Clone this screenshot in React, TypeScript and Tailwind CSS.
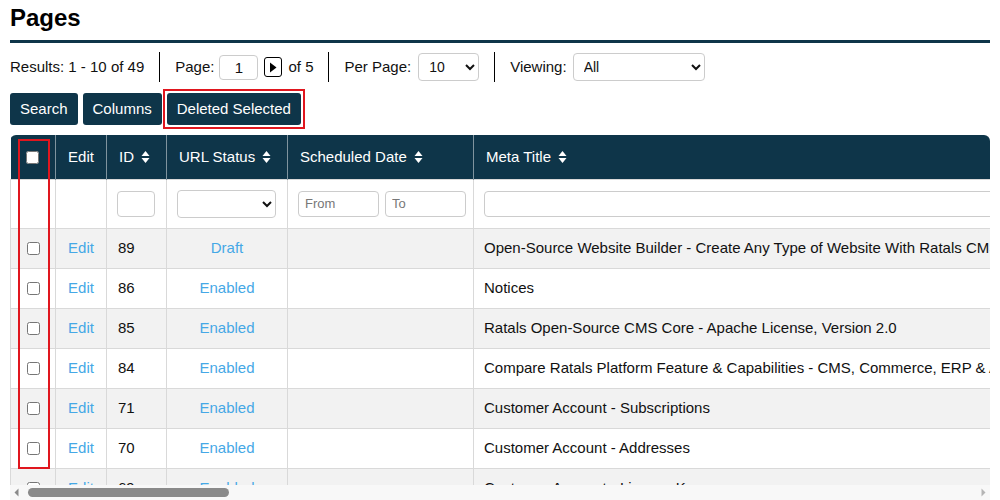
import React from "react";

const NAVY = "bg-[#0e3549]";

function SortIcon() {
  return (
    <svg width="9" height="14" viewBox="0 0 9 14" className="inline-block ml-[7px] -mt-[2px] align-middle">
      <path d="M0.5 6 L4.5 1 L8.5 6 Z" fill="white" />
      <path d="M0.5 8 L4.5 13 L8.5 8 Z" fill="white" />
    </svg>
  );
}

const rows = [
  { id: 89, status: "Draft", title: "Open-Source Website Builder - Create Any Type of Website With Ratals CMS" },
  { id: 86, status: "Enabled", title: "Notices" },
  { id: 85, status: "Enabled", title: "Ratals Open-Source CMS Core - Apache License, Version 2.0" },
  { id: 84, status: "Enabled", title: "Compare Ratals Platform Feature & Capabilities - CMS, Commerce, ERP & API" },
  { id: 71, status: "Enabled", title: "Customer Account - Subscriptions" },
  { id: 70, status: "Enabled", title: "Customer Account - Addresses" },
  { id: 69, status: "Enabled", title: "Customer Account - License Keys" },
];

function Sep() {
  return <div className="w-px h-[30px] bg-black mx-[15px]" />;
}

export default function App() {
  return (
    <div className="w-[1000px] h-[500px] overflow-hidden bg-white px-[10px] text-[#111] font-['Liberation_Sans',Arial,sans-serif]">
      <h1 className="text-[24px] font-bold leading-[28px] pt-[4px] pb-[8px] border-b-[3px] border-[#0e3549] text-black">
        Pages
      </h1>

      <div className="flex items-center h-[30px] mt-[9px] text-[15px]">
        <span>Results: 1 - 10 of 49</span>
        <Sep />
        <span>Page:</span>
        <input
          defaultValue="1"
          className="ml-[5px] w-[39px] h-[25px] border border-[#ccc] rounded-[4px] text-center text-[15px] bg-white"
        />
        <button className="ml-[6px] w-[18px] h-[20px] border border-black rounded-[3px] flex items-center justify-center bg-white">
          <svg width="8" height="11" viewBox="0 0 8 11">
            <path d="M1 0.5 L7.5 5.5 L1 10.5 Z" fill="black" />
          </svg>
        </button>
        <span className="ml-[6px]">of 5</span>
        <Sep />
        <span>Per Page:</span>
        <select className="ml-[7px] w-[61px] h-[28px] border border-[#ccc] rounded-[4px] bg-white text-[14px] pl-[6px]">
          <option>10</option>
        </select>
        <Sep />
        <span>Viewing:</span>
        <select className="ml-[6px] w-[132px] h-[28px] border border-[#ccc] rounded-[4px] bg-white text-[14px] pl-[6px]">
          <option>All</option>
        </select>
      </div>

      <div className="flex mt-[11px]">
        <button className={`${NAVY} text-white text-[15px] h-[32px] px-[10px] rounded-[3px]`}>Search</button>
        <button className={`${NAVY} ml-[5px] text-white text-[15px] h-[32px] px-[10px] rounded-[3px]`}>Columns</button>
        <div className="relative ml-[5px]">
          <button className={`${NAVY} text-white text-[15px] h-[32px] px-[10px] rounded-[3px]`}>
            Deleted Selected
          </button>
          <div className="absolute -inset-[4px] border-2 border-[#e0161e] pointer-events-none" />
        </div>
      </div>

      <div className="relative mt-[10px]">
        <div className="h-[350px] overflow-hidden rounded-t-[6px]">
          <table className="table-fixed border-collapse w-[4630px] text-[15px]">
            <colgroup>
              <col className="w-[45px]" />
              <col className="w-[51px]" />
              <col className="w-[60px]" />
              <col className="w-[121px]" />
              <col className="w-[186px]" />
              <col className="w-[700px]" />
              <col className="w-[1200px]" />
              <col className="w-[600px]" />
              <col className="w-[400px]" />
              <col className="w-[400px]" />
              <col className="w-[433px]" />
              <col className="w-[434px]" />
            </colgroup>
            <thead>
              <tr className={`${NAVY} text-white h-[44px]`}>
                <th className="border-r border-[#7f939e] text-center font-normal">
                  <input type="checkbox" className="align-middle w-[13px] h-[13px]" />
                </th>
                <th className="border-r border-[#7f939e] text-center font-normal">Edit</th>
                <th className="border-r border-[#7f939e] text-left font-normal pl-[12px] whitespace-nowrap">
                  ID<SortIcon />
                </th>
                <th className="border-r border-[#7f939e] text-left font-normal pl-[12px] whitespace-nowrap">
                  URL Status<SortIcon />
                </th>
                <th className="border-r border-[#7f939e] text-left font-normal pl-[12px] whitespace-nowrap">
                  Scheduled Date<SortIcon />
                </th>
                <th className="border-r border-[#7f939e] text-left font-normal pl-[12px] whitespace-nowrap">
                  Meta Title<SortIcon />
                </th>
                <th className="border-r border-[#7f939e] text-left font-normal pl-[12px] whitespace-nowrap">
                  Meta Description<SortIcon />
                </th>
                <th className="border-r border-[#7f939e] text-left font-normal pl-[12px] whitespace-nowrap">
                  URL<SortIcon />
                </th>
                <th className="border-r border-[#7f939e] text-left font-normal pl-[12px] whitespace-nowrap">
                  Page Type<SortIcon />
                </th>
                <th className="border-r border-[#7f939e] text-left font-normal pl-[12px] whitespace-nowrap">
                  Template<SortIcon />
                </th>
                <th className="border-r border-[#7f939e] text-left font-normal pl-[12px] whitespace-nowrap">
                  Created<SortIcon />
                </th>
                <th className="text-left font-normal pl-[12px] whitespace-nowrap">
                  Updated<SortIcon />
                </th>
              </tr>
            </thead>
            <tbody>
              <tr className="h-[49px] bg-white">
                <td className="border border-[#d9d9d9]" />
                <td className="border border-[#d9d9d9]" />
                <td className="border border-[#d9d9d9] pl-[10px]">
                  <input className="w-[38px] h-[26px] border border-[#ccc] rounded-[4px] bg-white block" />
                </td>
                <td className="border border-[#d9d9d9] pl-[10px]">
                  <select className="w-[99px] h-[28px] border border-[#ccc] rounded-[4px] bg-white block">
                    <option></option>
                  </select>
                </td>
                <td className="border border-[#d9d9d9] pl-[10px]">
                  <div className="flex gap-[6px]">
                    <input placeholder="From" className="w-[81px] h-[26px] border border-[#ccc] rounded-[4px] bg-white px-[6px] text-[13px] placeholder:text-[#777]" />
                    <input placeholder="To" className="w-[81px] h-[26px] border border-[#ccc] rounded-[4px] bg-white px-[6px] text-[13px] placeholder:text-[#777]" />
                  </div>
                </td>
                <td className="border border-[#d9d9d9] pl-[10px]">
                  <input className="w-[680px] h-[26px] border border-[#ccc] rounded-[4px] bg-white block" />
                </td>
                <td className="border border-[#d9d9d9] pl-[10px]">
                  <input className="w-[1170px] h-[26px] border border-[#ccc] rounded-[4px] bg-white block" />
                </td>
                <td className="border border-[#d9d9d9]" />
                <td className="border border-[#d9d9d9]" />
                <td className="border border-[#d9d9d9]" />
                <td className="border border-[#d9d9d9]" />
                <td className="border border-[#d9d9d9]" />
              </tr>
              {rows.map((r, i) => (
                <tr key={r.id} className={`h-[40px] ${i % 2 === 0 ? "bg-[#f2f2f2]" : "bg-white"}`}>
                  <td className="border border-[#d9d9d9] text-center">
                    <input type="checkbox" className="align-middle w-[13px] h-[13px]" />
                  </td>
                  <td className="border border-[#d9d9d9] text-center text-[#45a8e6]">Edit</td>
                  <td className="border border-[#d9d9d9] pl-[11px]">{r.id}</td>
                  <td className="border border-[#d9d9d9] text-center text-[#45a8e6]">{r.status}</td>
                  <td className="border border-[#d9d9d9]" />
                  <td className="border border-[#d9d9d9] pl-[10px] whitespace-nowrap overflow-hidden">{r.title}</td>
                  <td className="border border-[#d9d9d9]" />
                  <td className="border border-[#d9d9d9]" />
                  <td className="border border-[#d9d9d9]" />
                  <td className="border border-[#d9d9d9]" />
                  <td className="border border-[#d9d9d9]" />
                  <td className="border border-[#d9d9d9]" />
                </tr>
              ))}
            </tbody>
          </table>
        </div>

        {/* horizontal scrollbar */}
        <div className="h-[15px] bg-[#f8f8f8] flex items-center">
          <svg width="15" height="15" viewBox="0 0 15 15" className="shrink-0">
            <path d="M4.5 7.5 L8.5 3.5 L8.5 11.5 Z" fill="#8a8a8a" />
          </svg>
          <div className="ml-[3px] w-[201px] h-[9px] rounded-full bg-[#8a8a8a]" />
          <div className="flex-1" />
          <svg width="15" height="15" viewBox="0 0 15 15" className="shrink-0">
            <path d="M10.5 7.5 L6.5 3.5 L6.5 11.5 Z" fill="#b5b5b5" />
          </svg>
        </div>

        <div className="absolute left-[8px] top-[4px] w-[32px] h-[330px] border-2 border-[#e0161e] pointer-events-none" />
      </div>
    </div>
  );
}
